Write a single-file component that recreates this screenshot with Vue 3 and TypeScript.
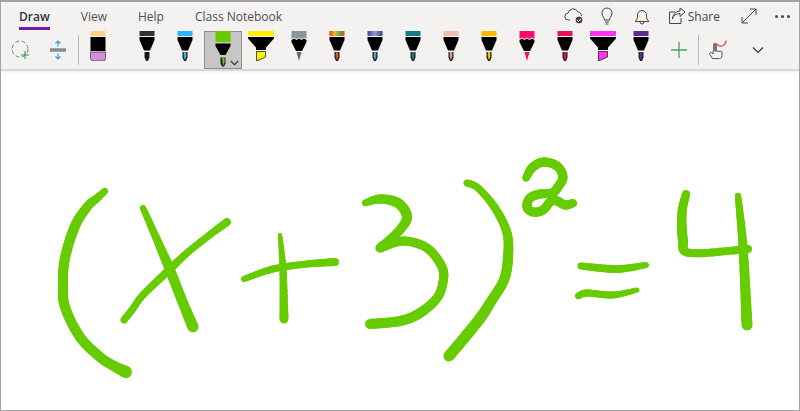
<script setup lang="ts">
type Pen = {
  kind: 'pen' | 'marker' | 'glitter' | 'highlighter'
  cap: string
  tip: string
}

// x, y, width along the centre of a stroke
type InkPoint = [number, number, number]

const tabs = ['Draw', 'View', 'Help', 'Class Notebook']

const pens: Pen[] = [
  { kind: 'pen', cap: '#333333', tip: '#111111' },
  { kind: 'pen', cap: '#29b6f6', tip: '#29b6f6' },
  { kind: 'marker', cap: '#66cc00', tip: '#66cc00' },
  { kind: 'highlighter', cap: '#fff000', tip: '#fff000' },
  { kind: 'glitter', cap: '#8a9599', tip: '#5f6a6e' },
  { kind: 'pen', cap: 'url(#rainbow)', tip: '#d8531f' },
  { kind: 'pen', cap: 'url(#galaxy)', tip: '#3ba8c4' },
  { kind: 'pen', cap: '#0f7c86', tip: '#0f7c86' },
  { kind: 'pen', cap: '#efbfae', tip: '#d9a08c' },
  { kind: 'pen', cap: '#ffb900', tip: '#ffb900' },
  { kind: 'glitter', cap: '#ff0a6c', tip: '#e8115b' },
  { kind: 'pen', cap: '#e8115b', tip: '#e8115b' },
  { kind: 'highlighter', cap: '#ff33ee', tip: '#ff33ee' },
  { kind: 'pen', cap: '#5c2d91', tip: '#5c2d91' }
]

const strokes: InkPoint[][] = [
  // (
  [[105, 191, 6], [96, 199, 8], [88, 206, 9], [75, 226, 10], [65, 258, 10], [63, 283, 10], [65, 307, 10], [80, 337, 10], [100, 357, 10], [114, 366, 10], [126, 372, 12]],
  // x
  [[143, 208, 6], [158, 242, 8], [170, 270, 10], [183, 303, 10], [193, 327, 11]],
  [[227, 222, 8], [207, 237, 7], [187, 253, 7], [167, 272, 8], [143, 295, 7], [132, 310, 7], [124, 320, 7]],
  // +
  [[244, 279, 6], [273, 269, 7], [307, 264, 7], [335, 262, 8]],
  [[280, 235, 4], [283, 270, 7], [284, 319, 9]],
  // 3
  [[365, 203, 6], [380, 199, 9], [398, 203, 10], [407, 217, 10], [398, 232, 9], [380, 248, 9]],
  [[380, 248, 9], [403, 241, 9], [427, 248, 9], [442, 267, 9], [443, 282, 9], [437, 298, 9], [420, 313, 10], [400, 321, 10], [370, 324, 10]],
  // )
  [[467, 183, 7], [478, 188, 7], [495, 208, 8], [507, 233, 9], [508, 258, 10], [504, 280, 10], [492, 300, 10], [481, 317, 11], [465, 337, 11], [449, 356, 11]],
  // 2
  [[526, 178, 7], [532, 168, 9], [543, 162, 9], [557, 166, 9], [563, 177, 9], [558, 187, 9], [552, 193, 9], [540, 194, 9], [530, 198, 9], [527, 207, 9], [533, 212, 9], [543, 210, 9], [553, 200, 9], [565, 205, 9], [573, 203, 8]],
  // =
  [[581, 266, 7], [617, 269, 8], [646, 265, 6]],
  [[578, 296, 6], [587, 293, 7], [613, 295, 7], [637, 290, 5]],
  // 4
  [[686, 194, 8], [682, 213, 9], [683, 240, 10], [690, 253, 8], [748, 249, 8]],
  [[738, 196, 6], [743, 247, 9], [747, 325, 11]]
]

function spline(p0: number, p1: number, p2: number, p3: number, t: number) {
  return 0.5 * (2 * p1 + (p2 - p0) * t + (2 * p0 - 5 * p1 + 4 * p2 - p3) * t * t + (3 * p1 - p0 - 3 * p2 + p3) * t * t * t)
}

// Smooth each stroke and cut it in short pieces so the width can change along it
function inkSegments(points: InkPoint[]) {
  const out: { x1: number; y1: number; x2: number; y2: number; w: number }[] = []
  for (let i = 0; i < points.length - 1; i++) {
    const a = points[Math.max(i - 1, 0)]
    const b = points[i]
    const c = points[i + 1]
    const d = points[Math.min(i + 2, points.length - 1)]
    let prev: number[] = [b[0], b[1]]
    for (let s = 1; s <= 10; s++) {
      const t = s / 10
      const x = spline(a[0], b[0], c[0], d[0], t)
      const y = spline(a[1], b[1], c[1], d[1], t)
      out.push({ x1: prev[0], y1: prev[1], x2: x, y2: y, w: b[2] + (c[2] - b[2]) * t })
      prev = [x, y]
    }
  }
  return out
}

const ink = strokes.flatMap(inkSegments)
</script>

<template>
  <div class="app">
    <header class="ribbon">
      <div class="top-row">
        <nav class="tabs">
          <span v-for="(tab, i) in tabs" :key="tab" class="tab" :class="{ active: i === 0 }">{{ tab }}</span>
        </nav>
        <div class="actions">
          <svg class="cloud" width="22" height="20" viewBox="0 0 22 20" fill="none" stroke="#444" stroke-width="1">
            <path d="M6 14H4.5a3.5 3.5 0 0 1-.3-7A5 5 0 0 1 13.8 6a3.6 3.6 0 0 1 3.6 4" />
            <circle cx="15" cy="14" r="4" fill="#444" stroke="#f3f2f1" />
            <path d="M13 14l1.5 1.5 2.5-2.7" stroke="#fff" />
          </svg>
          <svg class="bulb" width="16" height="20" viewBox="0 0 16 20" fill="none" stroke="#444" stroke-width="1">
            <path d="M5.5 14c0-2.5-2.500-3.500-2.500-7a5 5 0 0 1 10 0c0 3.500-2.500 4.500-2.500 7z" />
            <path d="M6 16h4M6.500 18h3" />
          </svg>
          <svg class="bell" width="18" height="20" viewBox="0 0 18 20" fill="none" stroke="#444" stroke-width="1">
            <path d="M2 15.500c2-1.500 2.500-3 2.500-6.500a4.500 4.500 0 0 1 9 0c0 3.500.5 5 2.500 6.500z" />
            <path d="M7 16a2 2 0 0 0 4 0" />
          </svg>
          <span class="share">
            <svg width="18" height="18" viewBox="0 0 18 18" fill="none" stroke="#444" stroke-width="1">
              <path d="M7 5H1.500v11.500h11.500V11" />
              <path d="M4.500 12c.5-3.500 3.500-5.500 7.500-5.500V9.500l5-4.500-5-4v3C7.500 4 5 7.500 4.500 12z" />
            </svg>
            Share
          </span>
          <svg class="expand" width="16" height="16" viewBox="0 0 16 16" fill="none" stroke="#444" stroke-width="1">
            <path d="M1 15L15 1M9 1h6v6M1 9v6h6" />
          </svg>
          <span class="more"><i></i><i></i><i></i></span>
        </div>
      </div>

      <div class="tool-row">
        <div class="slot lasso">
          <svg width="20" height="20" viewBox="0 0 20 20" fill="none">
            <circle cx="9" cy="9" r="8" stroke="#808080" stroke-dasharray="4 2.500" />
            <path d="M14 11v8M10 15h8" stroke="#1f9d4d" stroke-width="1.100" />
          </svg>
        </div>
        <div class="slot space">
          <svg width="18" height="20" viewBox="0 0 18 20" fill="none">
            <path d="M1 10h16" stroke="#8a8a8a" stroke-width="3.500" />
            <path d="M9 1v5.500M6.500 3.500L9 1l2.500 2.500M9 19v-5.500M6.500 16.500L9 19l2.500-2.500" stroke="#2b9fe0" stroke-width="1.100" />
          </svg>
        </div>
        <span class="divider first"></span>

        <div class="slot eraser">
          <svg width="18" height="30" viewBox="0 0 18 30">
            <rect x="1.500" y="0" width="15" height="5" fill="#f9d488" />
            <rect x="1.500" y="6" width="15" height="14" fill="#000" />
            <path d="M1.500 21h15v6a3 3 0 0 1-3 3h-9a3 3 0 0 1-3-3z" fill="#d68ee0" stroke="#333" stroke-width=".7" />
          </svg>
        </div>

        <svg class="defs" width="0" height="0">
          <defs>
            <linearGradient id="rainbow">
              <stop offset="0" stop-color="#e03a1e" />
              <stop offset=".35" stop-color="#f5b52e" />
              <stop offset=".65" stop-color="#55b04a" />
              <stop offset="1" stop-color="#e0501e" />
            </linearGradient>
            <linearGradient id="galaxy">
              <stop offset="0" stop-color="#47428f" />
              <stop offset=".5" stop-color="#8f9ad8" />
              <stop offset="1" stop-color="#3a3f7c" />
            </linearGradient>
          </defs>
        </svg>

        <div v-for="(pen, i) in pens" :key="i" class="slot pen" :class="{ selected: pen.kind === 'marker' }">
          <svg v-if="pen.kind === 'highlighter'" width="28" height="30" viewBox="0 0 28 30">
            <rect x="1" y="0" width="26" height="5" :fill="pen.cap" />
            <path d="M1 6h26v1.500l-8 9V19H9v-2.500l-8-9z" fill="#000" />
            <path d="M9.500 20.500h9v5.500l-9 4z" :fill="pen.tip" stroke="#222" stroke-width=".8" />
          </svg>
          <svg v-else-if="pen.kind === 'marker'" class="marker" width="18" height="36" viewBox="0 0 18 36">
            <rect x="1.500" y="0" width="15" height="11" :fill="pen.cap" />
            <path d="M1.500 12.500h15v2.500l-5 9h-5l-5-9z" fill="#000" />
            <path d="M6.500 26.500h5v6l-1.500 3h-2l-1.500-3z" fill="#222" />
            <path d="M8 26.500h2.500v5L9 34.500z" :fill="pen.tip" />
          </svg>
          <svg v-else-if="pen.kind === 'glitter'" width="18" height="30" viewBox="0 0 18 30">
            <path d="M1.500 0h15v8L14 6.500 11.500 8 9 6.500 6.500 8 4 6.500 1.500 8z" :fill="pen.cap" />
            <path d="M1.500 9L4 7.500 6.500 9 9 7.500 11.500 9 14 7.500 16.500 9v2L12 20H6l-4.500-9z" fill="#000" />
            <path d="M6.500 21h5L9 30z" :fill="pen.tip" />
          </svg>
          <svg v-else width="18" height="30" viewBox="0 0 18 30">
            <rect x="1.500" y="0" width="15" height="5" :fill="pen.cap" />
            <path d="M1.500 6h15v3L12 19.500H6L1.500 9z" fill="#000" />
            <path d="M6.500 21h5v5.500l-1.500 3.500H8l-1.500-3.500z" fill="#222" />
            <path d="M7.800 21h2.400v5L9 29l-1.200-3z" :fill="pen.tip" />
          </svg>
          <svg v-if="pen.kind === 'marker'" class="pen-caret" width="9" height="6" viewBox="0 0 9 6" fill="none" stroke="#333" stroke-width="1.100">
            <path d="M.8 1l3.700 3.700L8.200 1" />
          </svg>
        </div>

        <div class="slot add">
          <svg width="18" height="18" viewBox="0 0 18 18" stroke="#4aa564" stroke-width="1.300">
            <path d="M9 1v16M1 9h16" />
          </svg>
        </div>
        <span class="divider"></span>
        <div class="slot touch">
          <svg width="20" height="20" viewBox="0 0 20 20" fill="none">
            <path d="M6.500 3c2 1.500 5 4 7.500 3s4-3 4-5.500" stroke="#e8464b" stroke-width="1.300" />
            <path d="M5 12V5a2 2 0 0 1 4 0v7z" fill="#777" />
            <path d="M5 11v3l-1.500-1.200c-1.500-.8-2.500.5-1.500 1.800l2.500 4h7c1.500 0 2.500-1 2.500-3v-3.500c0-1.200-1.800-1.200-2-.3 0-1-1.800-1-2-.1 0-1-1.800-1-2-.2" fill="#f3f2f1" stroke="#555" />
          </svg>
        </div>
        <div class="slot chevron">
          <svg width="12" height="8" viewBox="0 0 12 8" fill="none" stroke="#333" stroke-width="1.200">
            <path d="M1 1.500l5 5 5-5" />
          </svg>
        </div>
      </div>
    </header>

    <main class="canvas">
      <svg class="ink" viewBox="0 0 800 411" width="800" height="411">
        <line
          v-for="(seg, i) in ink"
          :key="i"
          :x1="seg.x1"
          :y1="seg.y1"
          :x2="seg.x2"
          :y2="seg.y2"
          :stroke-width="seg.w"
        />
      </svg>
    </main>
  </div>
</template>

<style scoped>
.app {
  width: 800px;
  height: 411px;
  box-sizing: border-box;
  border: 1px solid #a3a3a3;
  border-top-width: 2px;
  display: flex;
  flex-direction: column;
  position: relative;
  overflow: hidden;
  background: #fff;
  font-family: "Open Sans", "Noto Sans", sans-serif;
}

.ribbon {
  height: 67px;
  background: #f3f2f1;
  box-shadow: 0 2px 0 #d8d8d8, 0 3px 4px rgba(0, 0, 0, 0.08);
  position: relative;
  z-index: 1;
}

.top-row {
  height: 29px;
  display: flex;
  justify-content: space-between;
}

.tabs {
  display: flex;
  padding-left: 18px;
  gap: 31px;
}

.tab {
  font-size: 12px;
  line-height: 29px;
  height: 25px;
  color: #505050;
}

.tab.active {
  color: #333;
  font-weight: 600;
  border-bottom: 3px solid #7719aa;
}

.actions {
  display: flex;
  align-items: center;
  padding-right: 9px;
  height: 28px;
}

.actions svg {
  flex: none;
}

.bulb {
  margin-left: 13px;
}

.bell {
  margin-left: 18px;
}

.share {
  display: flex;
  align-items: center;
  gap: 2px;
  font-size: 12px;
  color: #444;
  margin-left: 17px;
}

.expand {
  margin-left: 21px;
}

.more {
  display: flex;
  gap: 3px;
  margin-left: 18px;
}

.more i {
  width: 3px;
  height: 3px;
  border-radius: 50%;
  background: #444;
}

.tool-row {
  height: 38px;
  display: flex;
  align-items: stretch;
}

.slot {
  display: flex;
  align-items: center;
  justify-content: center;
  flex: none;
}

.lasso {
  width: 37px;
  margin-left: 1px;
}

.space {
  width: 37px;
}

.divider {
  width: 1px;
  height: 30px;
  margin-top: 4px;
  background: #bbb;
  flex: none;
}

.divider.first {
  margin-left: 2px;
}

.eraser {
  width: 37px;
  margin-right: 12px;
  align-items: flex-start;
}

.defs {
  position: absolute;
}

.pen {
  width: 38px;
  box-sizing: border-box;
  align-items: flex-start;
  position: relative;
}

.pen.selected {
  background: #c8c6c4;
  border: 1px solid #8f8f8f;
}

.marker {
  margin-top: -1px;
}

.pen-caret {
  position: absolute;
  right: 2px;
  bottom: 2px;
}

.add {
  width: 38px;
}

.touch {
  width: 35px;
  margin-left: 1px;
}

.chevron {
  width: 46px;
}

.canvas {
  flex: 1;
  min-height: 0;
}

.ink {
  position: absolute;
  left: -1px;
  top: -2px;
  pointer-events: none;
  fill: none;
  stroke: #66cc00;
  stroke-linecap: round;
}
</style>
